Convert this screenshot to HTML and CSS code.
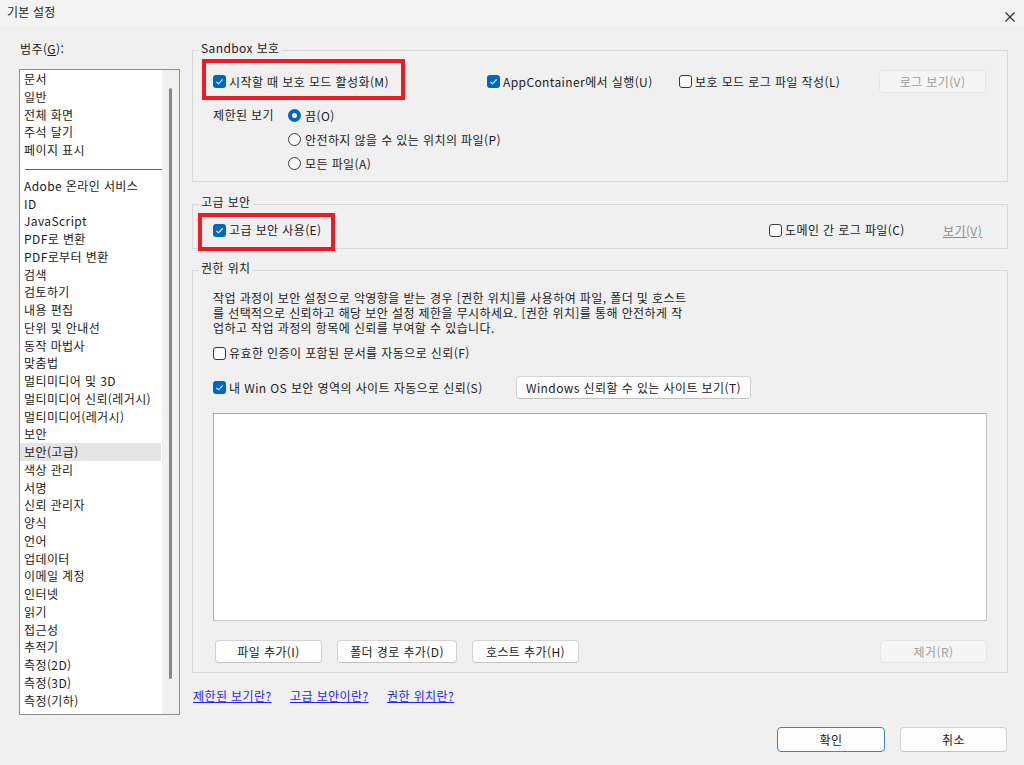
FILE: index.html
```html
<!DOCTYPE html>
<html lang="ko">
<head>
<meta charset="utf-8">
<title>기본 설정</title>
<link rel="stylesheet" href="styles.css">
</head>
<body>
<div class="window">
  <header class="titlebar">
    <span class="title">기본 설정</span>
    <svg class="close" width="10" height="10" viewBox="0 0 10 10"><path d="M0.5 0.5 L9.5 9.5 M9.5 0.5 L0.5 9.5" stroke="#2b2b2b" stroke-width="1.1" fill="none"/></svg>
  </header>

  <div class="main">
    <aside class="left">
      <div class="cat-label">범주(<u>G</u>):</div>
      <div class="listbox">
        <ul class="items">
          <li>문서</li>
          <li>일반</li>
          <li>전체 화면</li>
          <li>주석 달기</li>
          <li>페이지 표시</li>
          <li class="sep"></li>
          <li>Adobe 온라인 서비스</li>
          <li>ID</li>
          <li>JavaScript</li>
          <li>PDF로 변환</li>
          <li>PDF로부터 변환</li>
          <li>검색</li>
          <li>검토하기</li>
          <li>내용 편집</li>
          <li>단위 및 안내선</li>
          <li>동작 마법사</li>
          <li>맞춤법</li>
          <li>멀티미디어 및 3D</li>
          <li>멀티미디어 신뢰(레거시)</li>
          <li>멀티미디어(레거시)</li>
          <li>보안</li>
          <li class="sel">보안(고급)</li>
          <li>색상 관리</li>
          <li>서명</li>
          <li>신뢰 관리자</li>
          <li>양식</li>
          <li>언어</li>
          <li>업데이터</li>
          <li>이메일 계정</li>
          <li>인터넷</li>
          <li>읽기</li>
          <li>접근성</li>
          <li>추적기</li>
          <li>측정(2D)</li>
          <li>측정(3D)</li>
          <li>측정(기하)</li>
        </ul>
        <div class="scroll"><div class="thumb"></div></div>
      </div>
    </aside>

    <section class="right">
      <fieldset class="group g-sandbox">
        <legend>Sandbox 보호</legend>
        <div class="body-sandbox">
          <div class="row-sandbox">
            <label class="check mark mark-1"><span class="box on"><svg width="13" height="13" viewBox="0 0 13 13"><path d="M3.4 6.8 L5.5 8.8 L9.6 4.5" stroke="#fff" stroke-width="1.1" fill="none"/></svg></span><span>시작할 때 보호 모드 활성화(M)</span></label>
            <label class="check"><span class="box on"><svg width="13" height="13" viewBox="0 0 13 13"><path d="M3.4 6.8 L5.5 8.8 L9.6 4.5" stroke="#fff" stroke-width="1.1" fill="none"/></svg></span><span>AppContainer에서 실행(U)</span></label>
            <label class="check"><span class="box"></span><span>보호 모드 로그 파일 작성(L)</span></label>
            <button class="btn disabled">로그 보기(V)</button>
          </div>
          <div class="row-restrict">
            <span class="restrict-label">제한된 보기</span>
            <div class="radios">
              <label class="radio-item"><span class="radio on"></span><span>끔(O)</span></label>
              <label class="radio-item"><span class="radio"></span><span>안전하지 않을 수 있는 위치의 파일(P)</span></label>
              <label class="radio-item"><span class="radio"></span><span>모든 파일(A)</span></label>
            </div>
          </div>
        </div>
      </fieldset>

      <fieldset class="group g-adv">
        <legend>고급 보안</legend>
        <div class="body-adv">
          <label class="check mark mark-2"><span class="box on"><svg width="13" height="13" viewBox="0 0 13 13"><path d="M3.4 6.8 L5.5 8.8 L9.6 4.5" stroke="#fff" stroke-width="1.1" fill="none"/></svg></span><span>고급 보안 사용(E)</span></label>
          <label class="check"><span class="box"></span><span>도메인 간 로그 파일(C)</span></label>
          <span class="disabled-link">보기(V)</span>
        </div>
      </fieldset>

      <fieldset class="group g-locs">
        <legend>권한 위치</legend>
        <div class="body-locs">
          <p class="desc">
            <span>작업 과정이 보안 설정으로 악영향을 받는 경우 [권한 위치]를 사용하여 파일, 폴더 및 호스트</span>
            <span>를 선택적으로 신뢰하고 해당 보안 설정 제한을 무시하세요. [권한 위치]를 통해 안전하게 작</span>
            <span>업하고 작업 과정의 항목에 신뢰를 부여할 수 있습니다.</span>
          </p>
          <div class="row-f">
            <label class="check"><span class="box"></span><span>유효한 인증이 포함된 문서를 자동으로 신뢰(F)</span></label>
          </div>
          <div class="row-s">
            <label class="check"><span class="box on"><svg width="13" height="13" viewBox="0 0 13 13"><path d="M3.4 6.8 L5.5 8.8 L9.6 4.5" stroke="#fff" stroke-width="1.1" fill="none"/></svg></span><span>내 Win OS 보안 영역의 사이트 자동으로 신뢰(S)</span></label>
            <button class="btn btn-win">Windows 신뢰할 수 있는 사이트 보기(T)</button>
          </div>
          <div class="textarea"></div>
          <div class="row-buttons">
            <button class="btn btn-file">파일 추가(I)</button>
            <button class="btn btn-folder">폴더 경로 추가(D)</button>
            <button class="btn btn-host">호스트 추가(H)</button>
            <button class="btn disabled btn-remove">제거(R)</button>
          </div>
        </div>
      </fieldset>

      <div class="links">
        <a class="link" href="#">제한된 보기란?</a>
        <a class="link" href="#">고급 보안이란?</a>
        <a class="link" href="#">권한 위치란?</a>
      </div>
    </section>
  </div>

  <footer class="footer">
    <button class="btn btn-footer default">확인</button>
    <button class="btn btn-footer">취소</button>
  </footer>
</div>
</body>
</html>
```

FILE: styles.css
```css
html, body {
  margin: 0;
  padding: 0;
}

body {
  background: #f0f0f0;
  font-family: "Noto Sans CJK KR", "Noto Sans", sans-serif;
  font-size: 12px;
  letter-spacing: 0.4px;
  color: #1b1b1b;
  width: 1024px;
  height: 765px;
  overflow: hidden;
}

.window {
  width: 1024px;
  height: 765px;
}

/* Title bar */
.titlebar {
  height: 26px;
  box-sizing: border-box;
  background: #f3f3f3;
  display: flex;
  justify-content: space-between;
  align-items: flex-start;
  padding: 3px 9px 0 7px;
}

.title {
  line-height: 18px;
  letter-spacing: 0.2px;
}

.close {
  margin-top: 9px;
}

/* Main two-column area */
.main {
  display: flex;
  align-items: flex-start;
  gap: 12px;
  padding: 14px 16px 0 19px;
}

.left {
  width: 161px;
  flex: none;
}

.cat-label {
  line-height: 18px;
  padding-left: 1px;
  margin-bottom: 11px;
}

.cat-label u {
  text-underline-offset: 1px;
}

.listbox {
  height: 646px;
  box-sizing: border-box;
  border: 1px solid #8e8e8e;
  display: flex;
}

.items {
  list-style: none;
  margin: 0;
  padding: 0;
  width: 142px;
  background: #ffffff;
}

.items li {
  line-height: 17.75px;
  height: 17.75px;
  padding-left: 4px;
  white-space: nowrap;
  overflow: hidden;
}

.items li.sel {
  background: #e5e5e5;
  margin-right: 1px;
}

.items li.sep {
  height: 1px;
  line-height: 1px;
  padding: 0;
  margin: 10px 0 7px 5px;
  background: #1a73c8;
}

.scroll {
  width: 17px;
  background: #f0f0f0;
}

.thumb {
  width: 3px;
  height: 591px;
  margin: 18px 0 0 7px;
  background: #888888;
  border-radius: 2px;
}

.right {
  width: 816px;
  flex: none;
}

/* Group boxes */
.group {
  margin: 0;
  padding: 0;
  border: 1px solid #d9d9d9;
  min-width: 0;
}

.group legend {
  margin-left: 6px;
  padding: 0 2px 4px 2px;
  line-height: 16px;
}

.g-adv {
  margin-top: 12px;
}

.g-locs {
  margin-top: 11px;
}

/* Common controls */
.check {
  display: inline-flex;
  align-items: center;
  gap: 3px;
  white-space: nowrap;
  line-height: 18px;
  height: 18px;
}

.box {
  width: 13px;
  height: 13px;
  box-sizing: border-box;
  border: 1px solid #3a3a3a;
  border-radius: 3px;
  background: #fbfbfb;
  flex: none;
  display: block;
}

.box.on {
  border: none;
  background: #0067c0;
}

.box svg {
  display: block;
}

.radio-item {
  display: flex;
  align-items: center;
  gap: 4px;
  height: 24px;
  white-space: nowrap;
}

.radio {
  width: 13px;
  height: 13px;
  box-sizing: border-box;
  border: 1px solid #3a3a3a;
  border-radius: 50%;
  background: #fbfbfb;
  flex: none;
}

.radio.on {
  border: 4px solid #0067c0;
  background: #ffffff;
}

.btn {
  height: 23px;
  box-sizing: border-box;
  border: 1px solid #d3d3d3;
  border-bottom-color: #c2c2c2;
  border-radius: 4px;
  background: #fdfdfd;
  font-family: inherit;
  font-size: 12px;
  letter-spacing: 0.4px;
  color: #1b1b1b;
  padding: 0;
  display: flex;
  align-items: center;
  justify-content: center;
  white-space: nowrap;
}

.btn.disabled {
  background: #f5f5f5;
  border-color: #e6e6e6;
  color: #9e9e9e;
}

/* Annotation frames */
.mark {
  position: relative;
}

.mark::after {
  content: "";
  position: absolute;
  box-sizing: border-box;
  border: 4px solid #ec1c24;
  pointer-events: none;
}

.mark-1::after {
  left: -11px;
  top: -14px;
  width: 203px;
  height: 41px;
}

.mark-2::after {
  left: -15px;
  top: -8px;
  width: 137px;
  height: 38px;
}

/* Sandbox group */
.body-sandbox {
  padding: 10px 21px 6px 20px;
}

.row-sandbox {
  display: grid;
  grid-template-columns: 274px 192px 1fr 107px;
  align-items: center;
  height: 23px;
}

.row-restrict {
  display: grid;
  grid-template-columns: 75px 1fr;
  margin-top: 10px;
}

.restrict-label {
  line-height: 24px;
}

/* Advanced group */
.body-adv {
  padding: 6px 21px 8px 20px;
  display: grid;
  grid-template-columns: 556px 174px 1fr;
  align-items: center;
  height: 20px;
}

.disabled-link {
  color: #8d8d8d;
  text-decoration: underline;
  white-space: nowrap;
}

/* Locations group */
.body-locs {
  padding: 10px 20px 9px 20px;
}

.desc {
  margin: 0;
  line-height: 15px;
}

.desc span {
  display: block;
  white-space: nowrap;
}

.row-f {
  margin-top: 8px;
  height: 20px;
  display: flex;
  align-items: center;
}

.row-s {
  margin-top: 13px;
  height: 23px;
  display: grid;
  grid-template-columns: 303px 235px;
  align-items: center;
}

.textarea {
  margin-top: 14px;
  width: 774px;
  height: 208px;
  box-sizing: border-box;
  background: #ffffff;
  border: 1px solid #a9a9a9;
  border-right-color: #c8c8c8;
  border-bottom-color: #c8c8c8;
}

.row-buttons {
  margin-top: 19px;
  display: flex;
  align-items: center;
  padding-left: 2px;
}

.btn-file {
  width: 107px;
}

.btn-folder {
  width: 120px;
  margin-left: 15px;
}

.btn-host {
  width: 107px;
  margin-left: 15px;
}

.btn-remove {
  width: 107px;
  margin-left: auto;
}

/* Help links */
.links {
  margin-top: 15px;
  line-height: 16px;
  display: grid;
  grid-template-columns: 97px 97px auto;
  padding-left: 1px;
}

.link {
  color: #1f1fff;
  text-decoration: underline;
  white-space: nowrap;
}

/* Footer */
.footer {
  display: flex;
  justify-content: flex-end;
  gap: 15px;
  padding: 12px 17px 0 0;
}

.btn-footer {
  height: 25px;
  width: 107px;
}

.btn.default {
  width: 108px;
  border: 1px solid #3d84c6;
}
```
